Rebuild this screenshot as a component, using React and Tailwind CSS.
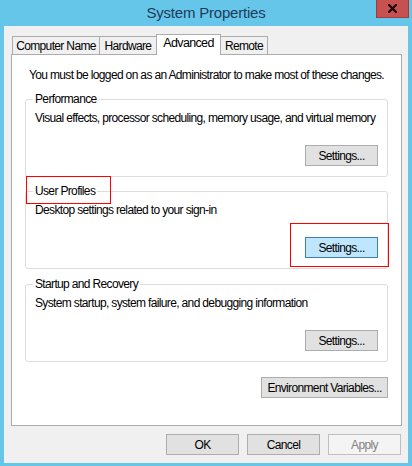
import React from 'react';

const Btn = ({ children, className = '' }) => (
  <button
    className={`h-[21px] flex items-center justify-center border border-[#adadad] bg-[#e1e1e1] text-black leading-none whitespace-nowrap ${className}`}
  >
    {children}
  </button>
);

const Group = ({ title, desc, children }) => (
  <div className="relative mx-[13px] h-[78px] border border-[#dcdcdc] rounded-[3px] flex flex-col">
    <span className="absolute -top-[8px] left-[7px] px-[2px] bg-white leading-[15px]">{title}</span>
    <p className="pl-[9px] pt-[11px] leading-[15px]">{desc}</p>
    <div className="mt-[19px] self-end mr-[9px]">{children}</div>
  </div>
);

const App = () => {
  const tabs = [
    { name: 'Computer Name', cls: 'w-[88px] ml-[1px] border-l border-t border-r' },
    { name: 'Hardware', cls: 'w-[56px] border-t' },
    { name: 'Advanced', active: true, cls: 'w-[65px] border-l border-t border-r' },
    { name: 'Remote', cls: 'w-[47px] border-t border-r' }
  ];

  return (
    <div className="w-[412px] h-[466px] bg-[#66c6ea] flex flex-col font-['Liberation_Sans',Arial,sans-serif] text-[12px] tracking-[-0.65px] whitespace-nowrap text-black">
      {/* Title bar */}
      <div className="relative h-[26px] flex items-center justify-center">
        <span className="text-[15px] text-[#1e3a5a] tracking-[-0.2px] pt-[1px]">
          System Properties
        </span>
        <button className="absolute top-0 right-[3px] w-[33px] h-[18px] bg-[#c75050] border border-[#9f3b3b] border-t-0 flex items-center justify-center">
          <svg width="9" height="9" viewBox="0 0 9 9">
            <path d="M1 1 L8 8 M8 1 L1 8" stroke="#1a0a0a" strokeWidth="2.2" strokeLinecap="square" />
          </svg>
        </button>
      </div>

      {/* Window body */}
      <div className="mx-[4px] h-[437px] bg-[#f0f0f0] pl-[7px] pt-[8px] flex flex-col">
        {/* Tabs */}
        <div className="h-[20px] flex items-end">
          {tabs.map((t) => (
            <div
              key={t.name}
              className={`border-[#acacac] flex items-center justify-center ${t.cls} ${
                t.active
                  ? 'h-[21px] -mb-[1px] bg-white relative z-10 pb-[3px] text-[12.5px]'
                  : 'h-[18px] bg-[#f0f0f0] pt-[1px]'
              }`}
            >
              {t.name}
            </div>
          ))}
        </div>

        {/* Panel */}
        <div className="w-[391px] h-[372px] border border-[#acacac] bg-white flex flex-col">
          <p className="pl-[17px] pt-[13px] leading-[15px]">
            You must be logged on as an Administrator to make most of these changes.
          </p>

          <div className="mt-[16px]">
            <Group title="Performance" desc="Visual effects, processor scheduling, memory usage, and virtual memory">
              <Btn className="w-[73px]">Settings...</Btn>
            </Group>
          </div>

          <div className="mt-[14px] relative">
            <Group title="User Profiles" desc="Desktop settings related to your sign-in">
              <Btn className="w-[73px] !bg-[#bee6fd] !border-[#3c7fb1]">Settings...</Btn>
            </Group>
            {/* highlight boxes */}
            <div className="absolute left-[14px] -top-[15px] w-[85px] h-[28px] border border-[#ff0000]"></div>
            <div className="absolute left-[278px] top-[32px] w-[99px] h-[44px] border border-[#ff0000]"></div>
          </div>

          <div className="mt-[15px]">
            <Group title="Startup and Recovery" desc="System startup, system failure, and debugging information">
              <Btn className="w-[73px]">Settings...</Btn>
            </Group>
          </div>

          <div className="mt-[15px] self-end mr-[13px]">
            <Btn className="w-[127px]">Environment Variables...</Btn>
          </div>
        </div>

        {/* Dialog buttons */}
        <div className="w-[391px] pr-[1px] mt-[8px] flex justify-end gap-[8px]">
          <Btn className="w-[73px]">OK</Btn>
          <Btn className="w-[73px]">Cancel</Btn>
          <Btn className="w-[73px] !bg-[#f4f4f4] !border-[#bfbfbf] !text-[#838383]">Apply</Btn>
        </div>
      </div>
    </div>
  );
};

export default App;
